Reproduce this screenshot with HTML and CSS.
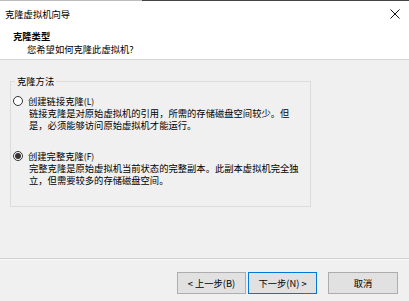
FILE: index.html
```html
<!DOCTYPE html>
<html lang="zh-CN">
<head>
<meta charset="utf-8">
<title>克隆虚拟机向导</title>
<link rel="stylesheet" href="styles.css">
</head>
<body>
<div class="window">
  <div class="topline"><span class="tl-light"></span><span class="tl-dark"></span></div>
  <div class="titlebar">
    <span class="title">克隆虚拟机向导</span>
    <svg class="close" width="10" height="10" viewBox="0 0 10 10"><path d="M0.5 0.5 L9.5 9.5 M9.5 0.5 L0.5 9.5" stroke="#111" stroke-width="1" fill="none"/></svg>
  </div>
  <div class="header">
    <div class="h-title">克隆类型</div>
    <div class="h-sub">您希望如何克隆此虚拟机?</div>
  </div>
  <div class="main">
    <fieldset class="group">
      <legend>克隆方法</legend>
      <div class="option">
        <div class="opt-label"><span class="radio"></span><span>创建链接克隆<span class="acc">(L)</span></span></div>
        <div class="opt-desc">链接克隆是对原始虚拟机的引用，所需的存储磁盘空间较少。但<br>是，必须能够访问原始虚拟机才能运行。</div>
      </div>
      <div class="option option-2">
        <div class="opt-label"><span class="radio checked"></span><span>创建完整克隆<span class="acc">(F)</span></span></div>
        <div class="opt-desc">完整克隆是原始虚拟机当前状态的完整副本。此副本虚拟机完全独<br>立，但需要较多的存储磁盘空间。</div>
      </div>
    </fieldset>
  </div>
  <div class="footer">
    <button class="btn">&lt; 上一步(B)</button>
    <button class="btn btn-default">下一步(N) &gt;</button>
    <button class="btn btn-cancel">取消</button>
  </div>
</div>
</body>
</html>
```
FILE: styles.css
```css
* { box-sizing: border-box; }
html, body { margin: 0; padding: 0; }
body {
  width: 409px;
  height: 301px;
  overflow: hidden;
  font-family: "Noto Sans CJK SC", "Noto Sans", sans-serif;
  font-size: 9.3px;
  line-height: 12px;
  color: #000;
  background: #f0f0f0;
}
.window {
  width: 409px;
  height: 301px;
  display: flex;
  flex-direction: column;
}
.topline { display: flex; height: 1px; flex: none; }
.tl-light { width: 142px; background: #bdbdbd; }
.tl-dark { flex: 1; background: #434343; }
.titlebar {
  flex: none;
  height: 27px;
  background: #fff;
  display: flex;
  align-items: flex-start;
  justify-content: space-between;
  padding: 7px 9px 0 5px;
}
.close { margin-top: 1px; }
.header {
  flex: none;
  height: 32px;
  background: #fff;
  border-bottom: 1px solid #d4d4d4;
  padding: 2px 0 0 13px;
}
.h-title { font-weight: bold; }
.h-sub { margin-top: 1px; padding-left: 14px; }
.main {
  flex: 1;
  padding: 15px 0 0 10px;
}
.group {
  margin: 0;
  width: 301px;
  border: 1px solid #dcdcdc;
  padding: 8px 2px 20px 1px;
}
.group legend {
  padding: 0 2px;
  margin-left: 3px;
  line-height: 12px;
}
.opt-label {
  display: flex;
  align-items: center;
  gap: 5px;
  padding-left: 1px;
}
.acc { font-size: 8.5px; }
.opt-desc { padding-left: 17px; }
.option-2 { margin-top: 19px; }
.radio {
  width: 10px;
  height: 10px;
  border: 1px solid #333;
  border-radius: 50%;
  background: #fff;
  display: inline-flex;
  align-items: center;
  justify-content: center;
  flex: none;
}
.radio.checked::after {
  content: "";
  width: 6px;
  height: 6px;
  border-radius: 50%;
  background: #333;
}
.footer {
  flex: none;
  height: 43px;
  border-top: 1px solid #d0d0d0;
  box-shadow: inset 0 1px 0 #fafafa;
  padding: 13px 11px 0 0;
  display: flex;
  justify-content: flex-end;
  align-items: flex-start;
  gap: 2px;
}
.btn {
  font-family: inherit;
  font-size: 9.3px;
  line-height: 12px;
  color: #000;
  width: 69px;
  height: 22px;
  padding: 0;
  background: #e1e1e1;
  border: 1px solid #adadad;
  border-radius: 0;
}
.btn-default {
  border: 1px solid #0078d7;
  box-shadow: inset 0 0 0 1px #e1e1e1;
}
.btn-cancel { margin-left: 9px; width: 70px; }
```
